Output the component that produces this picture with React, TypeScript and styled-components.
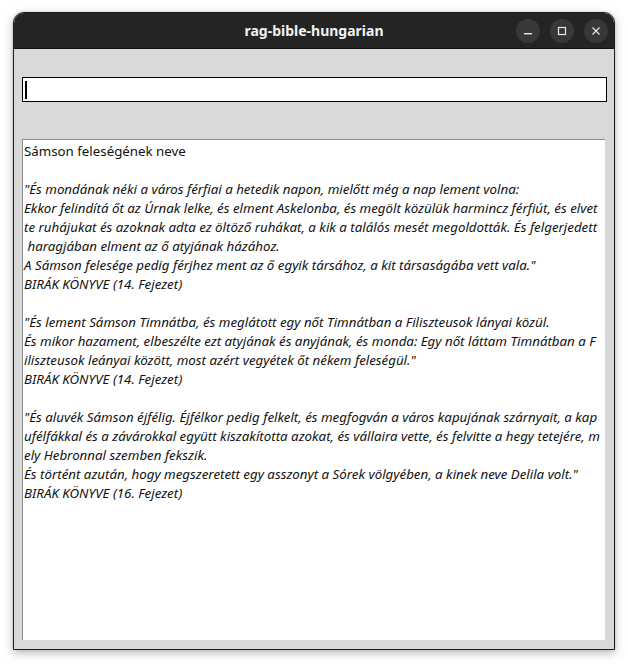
import React from "react";
import styled, { createGlobalStyle } from "styled-components";

const Global = createGlobalStyle`
  html, body { margin: 0; padding: 0; background: #ffffff; }
  #root { width: 628px; height: 666px; }
`;

const Screen = styled.div`
  width: 628px;
  height: 666px;
  padding: 12px 0 0 13px;
  box-sizing: border-box;
`;

const Window = styled.div`
  width: 602px;
  height: 638px;
  box-sizing: border-box;
  border: 1px solid #1e1e1e;
  border-radius: 11px 11px 0 0;
  background: #d9d9d9;
  display: flex;
  flex-direction: column;
  overflow: hidden;
  box-shadow: 0 3px 10px rgba(0, 0, 0, 0.28), 0 0 2px rgba(0, 0, 0, 0.2);
`;

const TitleBar = styled.div`
  position: relative;
  height: 35px;
  flex: none;
  background: #242424;
  border-bottom: 1px solid #121212;
  display: flex;
  align-items: center;
  justify-content: center;
`;

const Title = styled.div`
  font-family: "Noto Sans", "Open Sans", sans-serif;
  font-weight: 700;
  font-size: 14px;
  color: #f2f2f2;
  letter-spacing: 0;
`;

const Controls = styled.div`
  position: absolute;
  right: 6px;
  top: 6px;
  display: flex;
  gap: 10px;
`;

const CtrlButton = styled.div`
  width: 24px;
  height: 24px;
  border-radius: 50%;
  background: #383838;
  display: flex;
  align-items: center;
  justify-content: center;
`;

const Body = styled.div`
  flex: 1;
  display: flex;
  flex-direction: column;
  padding: 28px 8px 9px 8px;
  gap: 37px;
  min-height: 0;
`;

const Entry = styled.div`
  height: 25px;
  box-sizing: border-box;
  margin-right: -1px;
  background: #ffffff;
  border: 1px solid #000000;
  box-shadow: inset 0 0 0 1px #ffffff;
  position: relative;
  display: flex;
  align-items: center;
  padding-left: 2px;
`;

const Caret = styled.div`
  width: 2px;
  height: 18px;
  background: #000000;
`;

const TextArea = styled.div`
  flex: 1;
  margin-right: 1px;
  background: #ffffff;
  border-top: 1px solid #8c8c8c;
  border-left: 1px solid #8c8c8c;
  padding: 2px 0 0 1px;
  font-family: "Noto Sans", "Open Sans", sans-serif;
  font-size: 13.3px;
  line-height: 19px;
  color: #111111;
  white-space: pre;
  overflow: hidden;
`;

const Line = styled.div<{ $italic?: boolean }>`
  height: 19px;
  font-style: ${(p) => (p.$italic ? "italic" : "normal")};
`;

const lines: { t: string; i?: boolean }[] = [
  { t: "Sámson feleségének neve" },
  { t: "" },
  { t: "\"És mondának néki a város férfiai a hetedik napon, mielőtt még a nap lement volna:", i: true },
  { t: "Ekkor felindítá őt az Úrnak lelke, és elment Askelonba, és megölt közülük harmincz férfiút, és elvet", i: true },
  { t: "te ruhájukat és azoknak adta ez öltöző ruhákat, a kik a találós mesét megoldották. És felgerjedett", i: true },
  { t: " haragjában elment az ő atyjának házához.", i: true },
  { t: "A Sámson felesége pedig férjhez ment az ő egyik társához, a kit társaságába vett vala.\"", i: true },
  { t: "BIRÁK KÖNYVE (14. Fejezet)", i: true },
  { t: "" },
  { t: "\"És lement Sámson Timnátba, és meglátott egy nőt Timnátban a Filiszteusok lányai közül.", i: true },
  { t: "És mikor hazament, elbeszélte ezt atyjának és anyjának, és monda: Egy nőt láttam Timnátban a F", i: true },
  { t: "iliszteusok leányai között, most azért vegyétek őt nékem feleségül.\"", i: true },
  { t: "BIRÁK KÖNYVE (14. Fejezet)", i: true },
  { t: "" },
  { t: "\"És aluvék Sámson éjfélig. Éjfélkor pedig felkelt, és megfogván a város kapujának szárnyait, a kap", i: true },
  { t: "ufélfákkal és a závárokkal együtt kiszakította azokat, és vállaira vette, és felvitte a hegy tetejére, m", i: true },
  { t: "ely Hebronnal szemben fekszik.", i: true },
  { t: "És történt azután, hogy megszeretett egy asszonyt a Sórek völgyében, a kinek neve Delila volt.\"", i: true },
  { t: "BIRÁK KÖNYVE (16. Fejezet)", i: true },
];

export default function App() {
  return (
    <>
      <Global />
      <Screen>
        <Window>
          <TitleBar>
            <Title>rag-bible-hungarian</Title>
            <Controls>
              <CtrlButton>
                <svg width="12" height="12" viewBox="0 0 12 12">
                  <rect x="2" y="8" width="8" height="1.4" fill="#e8e8e8" />
                </svg>
              </CtrlButton>
              <CtrlButton>
                <svg width="12" height="12" viewBox="0 0 12 12">
                  <rect x="2.5" y="2.5" width="7" height="7" fill="none" stroke="#e8e8e8" strokeWidth="1.2" />
                </svg>
              </CtrlButton>
              <CtrlButton>
                <svg width="12" height="12" viewBox="0 0 12 12">
                  <path d="M2.5 2.5 L9.5 9.5 M9.5 2.5 L2.5 9.5" stroke="#e8e8e8" strokeWidth="1.2" />
                </svg>
              </CtrlButton>
            </Controls>
          </TitleBar>
          <Body>
            <Entry>
              <Caret />
            </Entry>
            <TextArea>
              {lines.map((l, k) => (
                <Line key={k} $italic={l.i}>
                  {l.t}
                </Line>
              ))}
            </TextArea>
          </Body>
        </Window>
      </Screen>
    </>
  );
}
